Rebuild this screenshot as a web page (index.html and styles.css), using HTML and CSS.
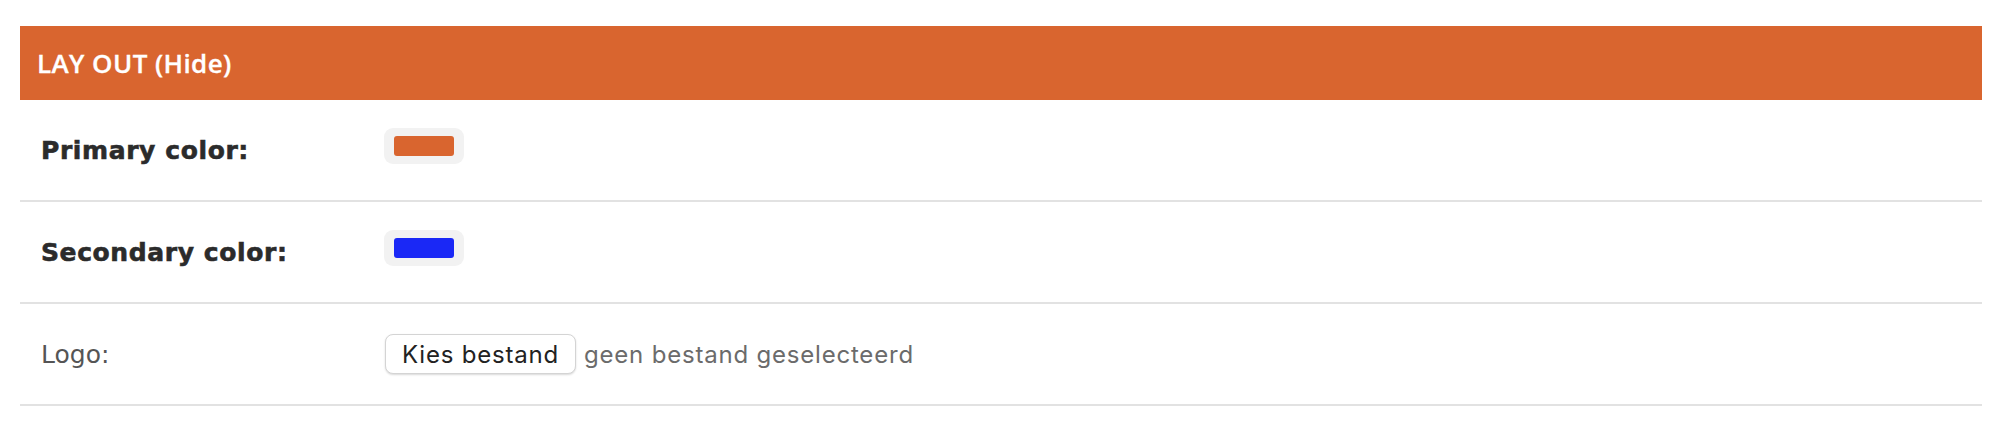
FILE: index.html
```html
<!DOCTYPE html>
<html>
  <head>
    <meta charset="UTF-8">
    <title>Lay out</title>
    <link rel="stylesheet" href="styles.css">
  </head>
  <body>

    <div class="panel">

      <div class="panel-header">LAY OUT (Hide)</div>

      <div class="setting">
        <div class="setting-label strong">Primary color:</div>
        <div class="setting-value">
          <span class="swatch"><span class="swatch-fill primary"></span></span>
        </div>
      </div>

      <div class="setting">
        <div class="setting-label strong">Secondary color:</div>
        <div class="setting-value">
          <span class="swatch"><span class="swatch-fill secondary"></span></span>
        </div>
      </div>

      <div class="setting">
        <div class="setting-label">Logo:</div>
        <div class="setting-value">
          <button class="file-button">Kies bestand</button>
          <span class="file-name">geen bestand geselecteerd</span>
        </div>
      </div>

    </div>

  </body>
</html>
```

FILE: styles.css
```css
body {
  margin: 0;
  background: #fff;
  font-family: "DejaVu Sans", sans-serif;
}

.panel {
  padding: 26px 26px 0 20px;
}

.panel-header {
  height: 74px;
  display: flex;
  align-items: center;
  padding-left: 17px;
  background-color: #d9652f;
  color: #fff;
  font-family: "Open Sans", sans-serif;
  font-size: 26px;
  font-weight: 600;
  letter-spacing: 0.4px;
  -webkit-text-stroke: 0.3px #fff;
}

.setting {
  display: flex;
  align-items: center;
  height: 100px;
  border-bottom: 2px solid #e2e2e2;
}

.setting-label {
  width: 343px;
  padding-left: 21px;
  font-size: 25px;
  color: #555;
}

.setting-label.strong {
  font-weight: 700;
  letter-spacing: 0.6px;
  color: #2b2b2b;
  -webkit-text-stroke: 0.6px #2b2b2b;
}

.setting-value {
  display: flex;
  align-items: center;
}

.swatch {
  display: flex;
  align-items: center;
  justify-content: center;
  width: 80px;
  height: 36px;
  margin-bottom: 9px;
  border-radius: 9px;
  background-color: #f2f2f2;
}

.swatch-fill {
  width: 60px;
  height: 20px;
  border-radius: 3px;
}

.swatch-fill.primary {
  background-color: #d9652f;
}

.swatch-fill.secondary {
  background-color: #1a28f6;
}

.file-button {
  height: 40px;
  margin-left: 1px;
  padding: 0 16px;
  border: 1px solid #d4d4d4;
  border-radius: 8px;
  background: #fff;
  box-shadow: 0 1px 2px rgba(0, 0, 0, 0.15);
  font-family: Inter, "Liberation Sans", sans-serif;
  font-size: 24px;
  letter-spacing: 0.8px;
  color: #222;
}

.file-name {
  margin-left: 8px;
  font-family: Inter, "Liberation Sans", sans-serif;
  font-size: 24px;
  letter-spacing: 0.8px;
  color: #6b6b6b;
}
```
